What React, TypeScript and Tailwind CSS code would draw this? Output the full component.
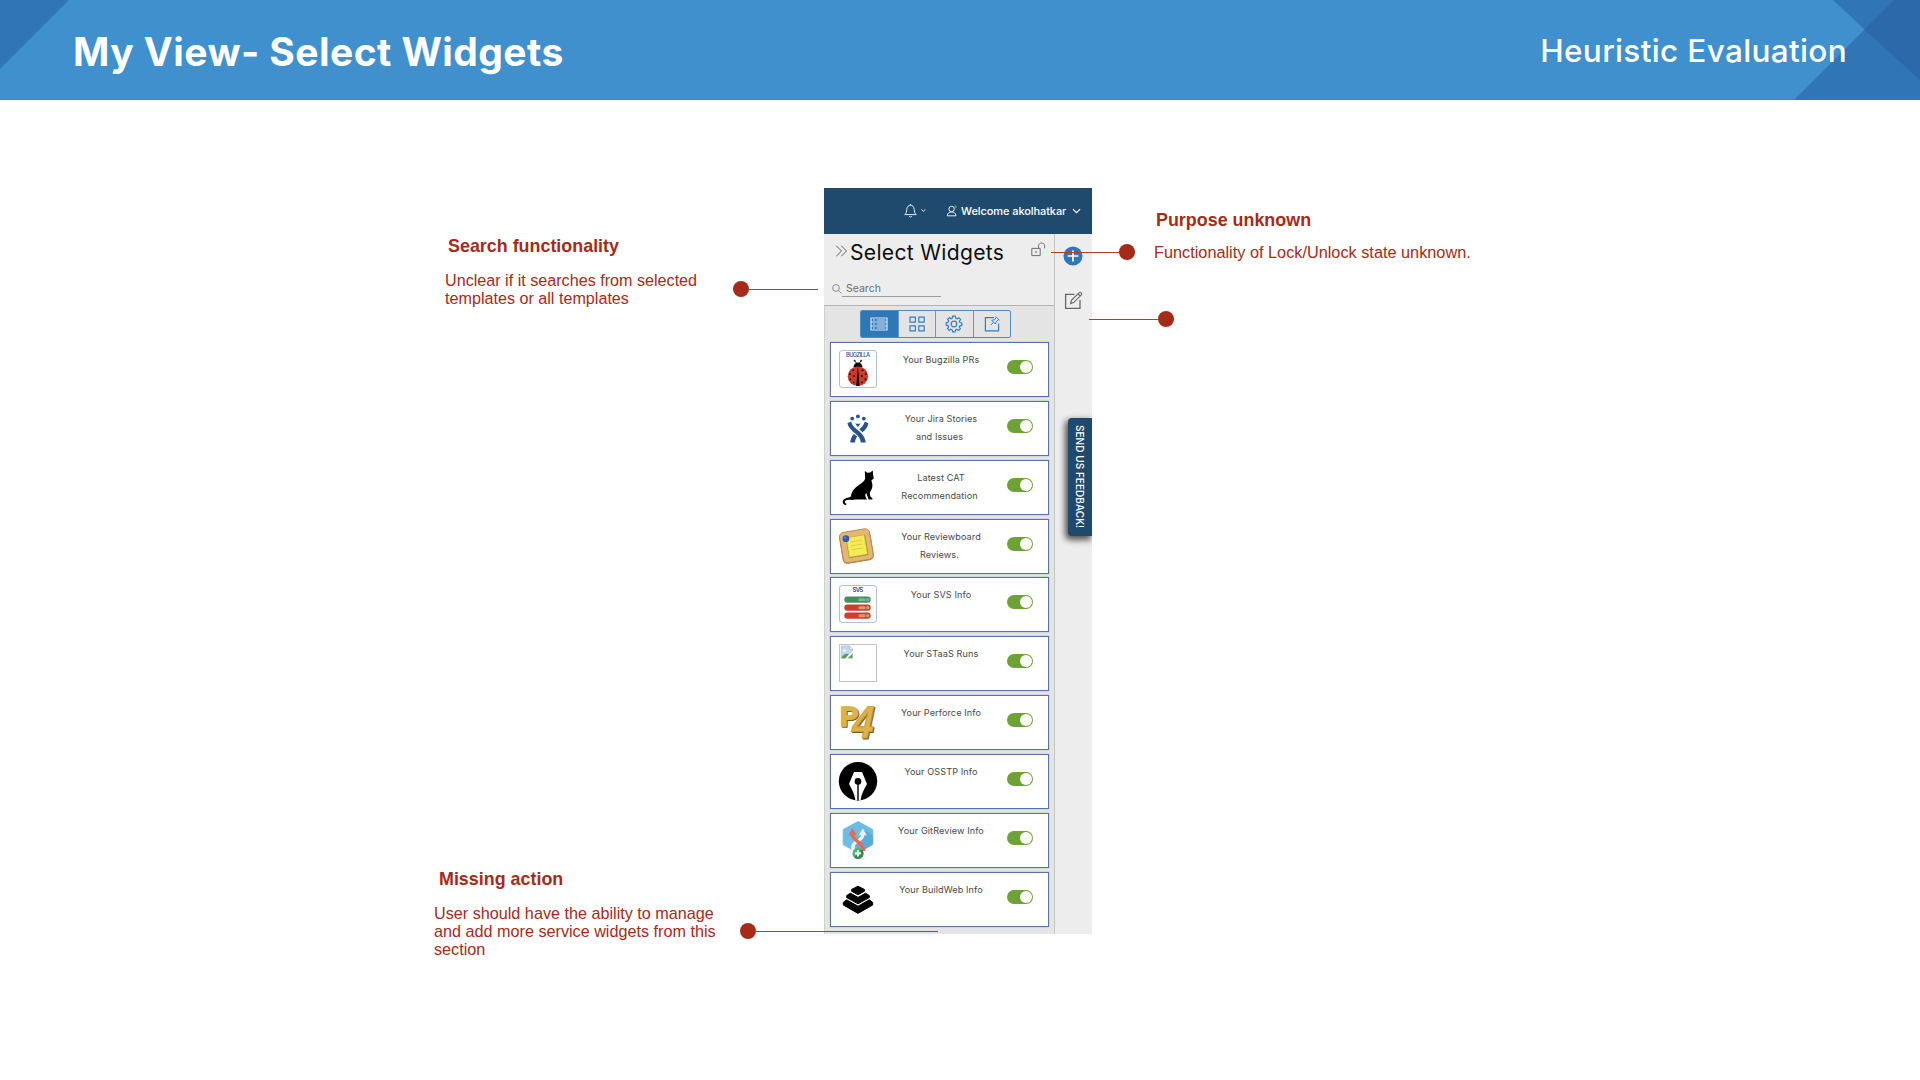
import React from "react";

type Widget = { lines: string[]; icon: React.ReactNode };

const LABEL = "font-['Inter',sans-serif]";
const HELV = "font-['Liberation_Sans',Arial,sans-serif]";

function Glyph({ children }: { children: React.ReactNode }) {
  return (
    <svg viewBox="0 0 38 38" className="h-[38px] w-[38px] shrink-0 overflow-visible">
      {children}
    </svg>
  );
}

const Frame = ({ fill }: { fill: string }) => (
  <rect x="0.5" y="0.5" width="37" height="37" rx="2.5" fill={fill} stroke="#b3bfd6" />
);

const BugzillaIcon = (
  <Glyph>
    <Frame fill="#fff" />
    <text x="19" y="7.4" textAnchor="middle" fontSize="5.8" textLength="24" fill="#2f4f8c" fontWeight="500" fontFamily="Inter, sans-serif">
      BUGZILLA
    </text>
    <path d="M17.5 13.5L15.8 10.8M20.3 13.5L22 10.8" stroke="#111" strokeWidth="0.9" />
    <circle cx="15.6" cy="10.6" r="0.9" fill="#111" />
    <circle cx="22.2" cy="10.6" r="0.9" fill="#111" />
    <path d="M14.5 17.5C14.5 10.8 23.4 10.8 23.4 17.5Z" fill="#0c0c0c" />
    <ellipse cx="18.9" cy="26.2" rx="10.2" ry="9.8" fill="#cb3b2b" />
    <path d="M18.9 16.5L17.2 36H20.6Z" fill="#0c0c0c" />
    <g fill="#1c0a08">
      <circle cx="14.2" cy="20.2" r="0.9" /><circle cx="23.6" cy="20.2" r="0.9" />
      <circle cx="11" cy="24" r="0.9" /><circle cx="26.8" cy="24" r="0.9" />
      <circle cx="15" cy="26" r="0.9" /><circle cx="22.8" cy="26" r="0.9" />
      <circle cx="11.4" cy="29.4" r="0.9" /><circle cx="26.4" cy="29.4" r="0.9" />
      <circle cx="14.8" cy="32.3" r="0.9" /><circle cx="23" cy="32.3" r="0.9" />
    </g>
  </Glyph>
);

const JiraIcon = (
  <Glyph>
    <g fill="#2a5388">
      <circle cx="13.2" cy="9.6" r="1.9" />
      <circle cx="18.9" cy="7.4" r="1.9" />
      <circle cx="24.8" cy="9.6" r="1.9" />
      <path d="M16.4 14.2Q18.9 15.4 21.4 14.2Q20.6 16.7 18.9 18Q17.2 16.7 16.4 14.2Z" />
      <path d="M8.4 14.2L12 12.4C13.2 16.8 16.6 19.2 20 22C23.8 25.2 26 28.4 26.8 33.6H21.8C21.4 29.6 19.4 27.2 16.3 24.6C12.6 21.5 9.3 18.4 8.4 14.2Z" />
      <path d="M29.4 14.2L25.8 12.4C24.9 16 22.8 18.2 20.2 20.2L23.6 23.2C26.6 20.8 28.7 18 29.4 14.2Z" />
      <path d="M15 25L18.4 27.8C16.8 29.2 16.2 30.9 16 33.6H11.2C11.5 30 12.7 27.2 15 25Z" />
    </g>
  </Glyph>
);

const CatIcon = (
  <Glyph>
    <path
      d="M25.8 3L28.4 4.8L31.2 4.5L33.8 2.4L34.1 7.2L34.9 10.2L32.4 12.4L33.4 16.4C33.8 20 31.8 22.6 30.8 24.6L31.2 28.2L33.4 30.2V31.4H29.6L27.2 25L26.2 26.8L26.8 29.6L28.2 31.6H15.8C13 32.4 9 31.2 6.8 32.6C5.2 33.6 5.6 35.2 7.6 35.9L6.8 37C3.4 36.4 2.8 33 5.2 31.2C7.2 29.8 10.4 30 11.8 28.6C13 20.4 19.6 17.6 24.2 13.8C26.4 11.6 26.4 10 26 8Z"
      fill="#000"
    />
  </Glyph>
);

const ReviewboardIcon = (
  <Glyph>
    <g transform="rotate(-9.5 17.5 19)">
      <rect x="1.6" y="3.6" width="31.6" height="31.6" rx="5" fill="#a67a45" />
      <rect x="2.3" y="3.4" width="30.3" height="30.8" rx="4.4" fill="#e2b673" stroke="#b98a51" strokeWidth="0.9" />
      <rect x="8.3" y="9.4" width="19.6" height="20.4" fill="#a58c35" />
      <rect x="8.6" y="9.2" width="18.4" height="19.8" fill="#f5ec55" stroke="#b9a43c" strokeWidth="0.6" />
      <path d="M12 14H24M12 18H24M12 22H24" stroke="#d6c843" strokeWidth="0.8" />
    </g>
    <circle cx="6.9" cy="11.7" r="3.4" fill="#3059a8" />
    <circle cx="6" cy="10.7" r="1.1" fill="#6088cb" />
  </Glyph>
);

const svsBars: [number, string, string][] = [
  [11.6, "#45905a", "#79b79b"],
  [19.6, "#c8402f", "#d69a6b"],
  [27.6, "#c8402f", "#d69a6b"],
];

const SvsIcon = (
  <Glyph>
    <Frame fill="#fbfbfd" />
    <text x="18.8" y="7.3" textAnchor="middle" fontSize="5.9" textLength="10.6" fontWeight="600" fill="#2f4f86" fontFamily="Inter, sans-serif">
      SVS
    </text>
    {svsBars.map(([y, c, d]) => (
      <g key={y}>
        <rect x="5.3" y={y} width="26.4" height="6.1" rx="3" fill={c} />
        <rect x="19.5" y={y + 1.6} width="7" height="3" rx="1.3" fill={d} />
        <circle cx="28.7" cy={y + 3.05} r="1.7" fill={d} />
      </g>
    ))}
  </Glyph>
);

const BrokenIcon = (
  <Glyph>
    <rect x="0.5" y="0.5" width="37" height="37" fill="#fff" stroke="#c3c3c3" />
    <path d="M2.2 2H10.4L13.6 5.2V6.2L6.4 14.2H2.2Z" fill="#c4d6f2" stroke="#a9b1c2" strokeWidth="0.6" />
    <path d="M10.4 2V5.2H13.6Z" fill="#fff" stroke="#9aa3b5" strokeWidth="0.5" />
    <path d="M3.6 7.2Q4 5.4 5.6 5.8Q7.4 5.4 7.4 7.2Z" fill="#fff" />
    <path d="M2.4 14.2C3.6 10.4 7 8.8 9.8 10.2L6.2 14.2Z" fill="#4ea447" />
    <path d="M9 14.2L13.6 9.4V14.2Z" fill="#4ea447" stroke="#a9b1c2" strokeWidth="0.4" />
  </Glyph>
);

const PerforceIcon = (
  <Glyph>
    {[
      { dx: 1, dy: 1.1, fill: "#7a5c1c", edge: "#7a5c1c" },
      { dx: 0, dy: 0, fill: "#dcb24a", edge: "#c79a35" },
    ].map((l) => (
      <g key={l.fill} transform={`translate(${l.dx} ${l.dy})`} fill={l.fill} strokeLinejoin="round" fontFamily="Liberation Sans, Arial, sans-serif" fontWeight="700">
        <text x="1" y="22.6" fontSize="27.5" stroke={l.fill} strokeWidth="1.7">P</text>
        <text transform="translate(10.6 35) skewX(-12) scale(0.84 1)" fontSize="46" stroke={l.edge} strokeWidth="1">4</text>
      </g>
    ))}
  </Glyph>
);

const PenIcon = (
  <Glyph>
    <circle cx="19" cy="19.2" r="19.2" fill="#000" />
    <path d="M15 10H23L28 22C25 27.5 22.4 32 21.6 38.3H16.4C15.6 32 13 27.5 10 22Z" fill="#fff" />
    <circle cx="19" cy="19.4" r="3.3" fill="#000" />
    <path d="M19 20V38.4" stroke="#000" strokeWidth="1.4" />
  </Glyph>
);

const GitIcon = (
  <Glyph>
    <path d="M19 0.6L33.8 8.6V23.6L19 31.8L4.2 23.6V8.6Z" fill="#6cbde3" stroke="#6cbde3" strokeLinejoin="round" />
    <path d="M27 9L33.8 15V23.6L22 30L13 22Z" fill="#5aabd6" />
    <g fill="none" strokeWidth="3.4">
      <path d="M14 29.5V25.5C14 20 23.8 19.6 23.8 14V12" stroke="#eef1f3" />
      <path d="M13.6 12V14.6C14 19 24.6 22 24.8 30" stroke="#e8694f" />
    </g>
    <path d="M23.8 7.6L27.9 14.2H19.7Z" fill="#eef1f3" />
    <path d="M13.6 7.6L17.7 14.2H9.5Z" fill="#e8694f" />
    <circle cx="19" cy="32.4" r="5.5" fill="#45b76e" />
    <path d="M22.9 28.5A5.5 5.5 0 0 1 15.1 36.3Z" fill="#2c8750" />
    <path d="M19 29.3V35.5M15.9 32.4H22.1" stroke="#fff" strokeWidth="2.1" />
  </Glyph>
);

const LayersIcon = (
  <Glyph>
    <g fill="#000" stroke="#000" strokeWidth="1" strokeLinejoin="round">
      <path d="M19 6.2L25.4 9.4V11.2L19 14.8L12.6 11.2V9.4Z" />
      <path d="M11.4 13.2L19 17.4L26.6 13.2L30.3 15.6V17.6L19 23.8L7.7 17.6V15.6Z" />
      <path d="M7.6 19.8L19 26.2L30.4 19.8L33.7 22.4V25L19 33.4L4.3 25V22.4Z" />
    </g>
  </Glyph>
);

const widgets: Widget[] = [
  { lines: ["Your Bugzilla PRs"], icon: BugzillaIcon },
  { lines: ["Your Jira Stories", "and Issues"], icon: JiraIcon },
  { lines: ["Latest CAT", "Recommendation"], icon: CatIcon },
  { lines: ["Your Reviewboard", "Reviews."], icon: ReviewboardIcon },
  { lines: ["Your SVS Info"], icon: SvsIcon },
  { lines: ["Your STaaS Runs"], icon: BrokenIcon },
  { lines: ["Your Perforce Info"], icon: PerforceIcon },
  { lines: ["Your OSSTP Info"], icon: PenIcon },
  { lines: ["Your GitReview Info"], icon: GitIcon },
  { lines: ["Your BuildWeb Info"], icon: LayersIcon },
];

function WidgetCard({ lines, icon }: Widget) {
  return (
    <li className="flex h-[55px] border border-[#5774a4] bg-white pt-[7px] pl-2 shadow-[0_0_1px_#7f96bd]">
      {icon}
      <p className="mr-[5px] w-[125px] pt-px text-center text-[9.1px] leading-[18.3px] tracking-[0.1px] text-[#484848]">
        <span className="block pl-[3px]">{lines[0]}</span>
        {lines[1] && <span className="block">{lines[1]}</span>}
      </p>
      <span className="mt-[10px] flex h-[14px] w-[26px] items-center justify-end rounded-full bg-[#6ea236] pr-px">
        <span className="h-3 w-3 rounded-full bg-white" />
      </span>
    </li>
  );
}

function Tab({ active, children }: { active?: boolean; children: React.ReactNode }) {
  return (
    <span
      className={
        active
          ? "flex flex-1 items-center justify-center bg-[#3077b8]"
          : "flex flex-1 items-center justify-center border-l border-[#5f9dce]"
      }
    >
      <svg viewBox="0 0 18 18" className="h-[18px] w-[18px]" fill="none" strokeWidth="1.2" stroke={active ? "#d6e6f5" : "#3380c0"}>
        {children}
      </svg>
    </span>
  );
}

function Connector({ className, flip }: { className: string; flip?: boolean }) {
  return (
    <span className={`absolute flex h-4 items-center ${flip ? "flex-row-reverse" : ""} ${className}`}>
      <span className="h-4 w-4 shrink-0 rounded-full bg-[#a62a18]" />
      <span className="h-px flex-1 bg-[#b03c2c]" />
    </span>
  );
}

function Panel() {
  return (
    <section className={`relative h-[746px] w-[268px] shrink-0 bg-[#ededed] ${LABEL}`}>
      <header className="flex h-[46px] items-center bg-[#1f4a6e] text-white">
        <svg viewBox="0 0 24 14" className="ml-[80px] h-[14px] w-[24px]" fill="none" stroke="#e4ebf1" strokeWidth="1">
          <path d="M0.8 10.6H12.2C10.6 9.2 10.4 7.6 10.2 5.2C9.9 2.6 8.4 1.2 6.5 1.2S3.1 2.6 2.8 5.2C2.6 7.6 2.4 9.2 0.8 10.6ZM5.2 12.4Q6.5 13.6 7.8 12.4M6.5 0V1.2M17.4 5.4L19.4 7.3L21.4 5.4" />
        </svg>
        <svg viewBox="0 0 12 12" className="ml-[18px] h-[12px] w-[12px]" fill="none" stroke="#e4ebf1" strokeWidth="1">
          <circle cx="5.6" cy="4" r="2.7" />
          <path d="M1.2 10.8C1.6 8 3.2 7 5.6 7S9.6 8 10 10.8Z" />
          <circle cx="9.4" cy="1.9" r="1.6" fill="#4f9b2f" stroke="none" />
        </svg>
        <span className="ml-[3px] text-[11px] font-medium tracking-[-0.08px] whitespace-nowrap">Welcome akolhatkar</span>
        <svg viewBox="0 0 10 6" className="ml-[6px] h-[6px] w-[9px]" fill="none" stroke="#fff" strokeWidth="1.2">
          <path d="M1 0.8L5 4.8L9 0.8" />
        </svg>
      </header>

      <div className="flex h-[700px]">
        <div className="flex w-[231px] flex-col border-r border-[#c4c4c4]">
          <div className="h-[72px] border-b border-[#b4b4b4]">
            <div className="flex items-start pt-[4px] pl-[11px]">
              <svg viewBox="0 0 14 14" className="mt-[6px] h-[14px] w-[13px]" fill="none" stroke="#555" strokeWidth="1">
                <path d="M1.4 1.4L7 7L1.4 12.6M6.8 1.4L12.4 7L6.8 12.6" />
              </svg>
              <h2 className="ml-[2px] w-[181px] text-[21.1px] leading-[30px] tracking-[0.3px] text-[#0d0d0d]">Select Widgets</h2>
              <svg viewBox="0 0 15 15" className="mt-[4px] h-[15px] w-[15px]" fill="none" stroke="#6f6f6f" strokeWidth="1">
                <path d="M0.8 6.4H9.2V13.6H0.8ZM5 8.8V11.2M7.6 6.4V3.6C7.6 0.2 13.6 0.2 13.6 3.6V6.4" />
              </svg>
            </div>
            <div className="mt-[12px] flex items-start pl-[8px]">
              <svg viewBox="0 0 11 11" className="mt-[4px] h-[10px] w-[10px]" fill="none" stroke="#777" strokeWidth="0.9">
                <circle cx="4.4" cy="4.4" r="3.7" />
                <path d="M7.2 7.2L10.4 10.4" />
              </svg>
              <span className="h-[17px] w-[99px] border-b border-[#9d9d9d] pl-[4px] text-[10.5px] leading-[17px] text-[#6d6d6d]">Search</span>
            </div>
          </div>

          <div className="flex flex-1 flex-col items-center border-l border-[#d0d0d0] bg-[#e4e4e4]">
            <div className="mt-1 mr-[8px] flex h-[28px] w-[151px] overflow-hidden rounded-[2px] border border-[#4a8dc5]">
              <Tab active>
                <path d="M1 3H17V15H1ZM1 7H17M1 11H17M3 5H5M6.6 5H15.4M3 9H5M6.6 9H15.4M3 13H5M6.6 13H15.4" />
              </Tab>
              <Tab>
                <path d="M2 2.2H7.4V7.2H2ZM10.8 2.2H16.2V7.2H10.8ZM2 10.8H7.4V15.8H2ZM10.8 10.8H16.2V15.8H10.8Z" />
              </Tab>
              <Tab>
                <circle cx="9" cy="9" r="2.8" />
                <path d="M7.6 1.2H10.4L10.8 3.2L12.2 3.8L13.9 2.7L15.6 4.6L14.4 6.2L14.9 7.6L16.8 8V10.4L14.9 10.8L14.3 12L15.4 13.7L13.5 15.4L11.9 14.3L10.6 14.9L10.2 16.8H7.6L7.2 14.9L5.8 14.3L4.2 15.4L2.5 13.5L3.6 11.9L3.1 10.6L1.2 10.2V7.8L3.1 7.3L3.7 6L2.6 4.3L4.5 2.6L6 3.7L7.2 3.2Z" />
              </Tab>
              <Tab>
                <path d="M11 2.6H2.4V15.8H15.6V8.6" />
                <path d="M12.6 1.4L16.6 5.4M13.2 2.4L11.6 4.6L8.8 5.4L12.4 9L13.4 6.4L15.6 4.8M10.6 7.2L7.8 10" strokeWidth="1" />
              </Tab>
            </div>
            <ul className="mt-1 flex h-[584.6px] w-[219px] flex-col justify-between">
              {widgets.map((w) => (
                <WidgetCard key={w.lines[0]} {...w} />
              ))}
            </ul>
          </div>
        </div>

        <aside className="flex w-[36px] flex-col items-center">
          <svg viewBox="0 0 20 20" className="mt-[12px] h-[20px] w-[20px]">
            <circle cx="10" cy="10" r="9.5" fill="#3077b8" />
            <path d="M10 4.6V15.4M4.6 10H15.4" stroke="#fff" strokeWidth="1.7" />
          </svg>
          <svg viewBox="0 0 19 19" className="mt-[25px] h-[19px] w-[19px]" fill="none" stroke="#666" strokeWidth="1.3">
            <path d="M10.4 3.4H1.6V17.4H16V9" />
            <path d="M6.6 12.6L7.4 9.4L15.2 1.6Q16.2 0.8 17.2 1.8T17.4 3.8L9.6 11.6ZM14 2.8L16.2 5" strokeWidth="1.1" />
          </svg>
          <div className="mt-[108px] -mr-px flex h-[118px] w-[24px] items-center justify-center self-end rounded-l-[4px] bg-[#1f4a6e] pr-px shadow-[-2px_3px_6px_1px_rgba(0,0,0,0.65)] [clip-path:inset(-12px_0_-14px_-12px)]">
            <span className="text-[10.1px] font-medium whitespace-nowrap text-white [writing-mode:vertical-rl]">SEND US FEEDBACK!</span>
          </div>
        </aside>
      </div>
    </section>
  );
}

export default function App() {
  return (
    <div className="relative h-[1080px] w-[1920px] overflow-hidden bg-white">
      <header className={`relative flex h-[100px] items-center justify-between bg-[#4090ce] pr-[73px] pl-[73px] text-white ${LABEL}`}>
        <svg viewBox="0 0 1920 100" className="absolute inset-0 h-full w-full">
          <path d="M0 0H69L0 69Z" fill="#3075b6" />
          <path d="M1833 0H1920V100H1794L1864.5 29.5Z" fill="#3075b6" />
          <path d="M1894 0H1920V80L1864.5 29.5Z" fill="#2b69ab" />
        </svg>
        <h1 className="relative mt-[2px] text-[39px] leading-none font-bold tracking-[0.43px]">My View- Select Widgets</h1>
        <span className="relative mt-[2px] text-[31.5px] leading-none font-medium tracking-[0.35px]">Heuristic Evaluation</span>
      </header>

      <main className={`flex text-[#a62a18] ${HELV}`}>
        <div className="w-[824px] pl-[434px]">
          <h3 className="mt-[135px] pl-[14px] text-[17.9px] leading-[22px] font-bold">Search functionality</h3>
          <p className="mt-[14px] w-[290px] pl-[11px] text-[16.15px] leading-[18px]">
            Unclear if it searches from selected
            <br />
            templates or all templates
          </p>
          <h3 className="mt-[561px] pl-[5px] text-[17.9px] leading-[22px] font-bold">Missing action</h3>
          <p className="mt-[14px] text-[16.2px] leading-[18px]">
            User should have the ability to manage
            <br />
            and add more service widgets from this
            <br />
            section
          </p>
        </div>
        <div className="pt-[88px]">
          <Panel />
        </div>
        <div className="pl-[62px]">
          <h3 className="mt-[109px] pl-[2px] text-[17.9px] leading-[22px] font-bold">Purpose unknown</h3>
          <p className="mt-[12px] text-[16.3px] leading-[18px] whitespace-nowrap">Functionality of Lock/Unlock state unknown.</p>
        </div>
      </main>

      <Connector className="top-[281px] left-[733px] w-[85px]" />
      <Connector className="top-[244px] left-[1051px] w-[84px]" flip />
      <Connector className="top-[311px] left-[1089px] w-[85px]" flip />
      <Connector className="top-[923px] left-[740px] w-[198px]" />
    </div>
  );
}
